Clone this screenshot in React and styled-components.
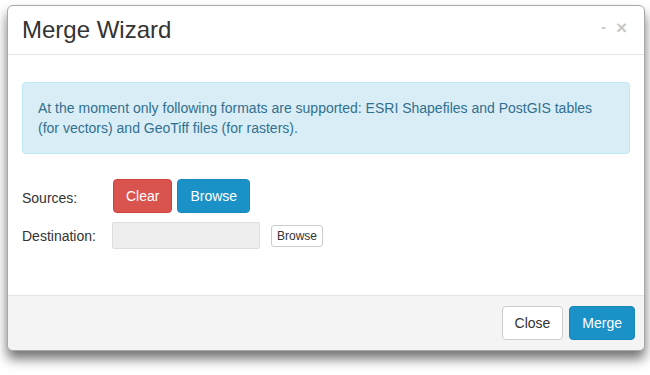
import React from "react";
import styled, { createGlobalStyle } from "styled-components";

const Global = createGlobalStyle`
  html, body { margin: 0; padding: 0; background: #fff; }
  body { font-family: "Liberation Sans", Arial, sans-serif; font-size: 14px; color: #333; }
  * { box-sizing: border-box; }
`;

const Page = styled.div`
  padding: 5px 0 24px 7px;
`;

const Modal = styled.div`
  width: 638px;
  height: 346px;
  border: 1px solid #a8a8a8;
  border-radius: 6px;
  background: #fff;
  box-shadow: 0 8px 12px rgba(0, 0, 0, 0.55);
  display: flex;
  flex-direction: column;
  overflow: hidden;
`;

const Header = styled.div`
  height: 49px;
  border-bottom: 1px solid #e5e5e5;
  padding: 11px 14px 0 14px;
  display: flex;
  align-items: flex-start;
  justify-content: space-between;
`;

const Title = styled.h4`
  margin: 0;
  font-size: 24px;
  line-height: 26px;
  font-weight: normal;
  color: #333;
`;

const Controls = styled.div`
  display: flex;
  align-items: flex-start;
  gap: 10px;
  padding-top: 1px;
  margin-right: 3px;
`;

const Ctl = styled.span`
  color: #c8c8c8;
  font-weight: bold;
  font-size: ${(p) => p.$size}px;
  line-height: 20px;
  margin-top: ${(p) => p.$top}px;
`;

const Body = styled.div`
  flex: 1;
  padding: 27px 14px 0 14px;
`;

const Alert = styled.div`
  background: #d9edf7;
  border: 1px solid #bce8f1;
  border-radius: 4px;
  color: #31708f;
  padding: 15px 15px;
  font-size: 14px;
  line-height: 20px;
`;

const Form = styled.div`
  margin-top: 25px;
  display: flex;
  flex-direction: column;
  gap: 9px;
`;

const Row = styled.div`
  display: flex;
  align-items: center;
`;

const Label = styled.div`
  width: ${(p) => p.$w}px;
  font-size: 14px;
  color: #333;
  padding-top: ${(p) => p.$pt || 0}px;
`;

const Btn = styled.button`
  font-family: inherit;
  font-size: 14px;
  line-height: 20px;
  padding: 6px 12px;
  height: 34px;
  border-radius: 4px;
  border: 1px solid ${(p) => p.$border};
  background: ${(p) => p.$bg};
  color: ${(p) => p.$color};
  cursor: pointer;
`;

const BtnGroup = styled.div`
  display: flex;
  gap: 5px;
`;

const Input = styled.div`
  width: 148px;
  height: 27px;
  background: #eee;
  border: 1px solid #ddd;
  border-radius: 2px;
`;

const SmallBtn = styled.button`
  margin-left: 11px;
  font-family: inherit;
  font-size: 12px;
  line-height: 16px;
  height: 22px;
  padding: 2px 5px;
  background: #fff;
  border: 1px solid #ccc;
  border-radius: 3px;
  color: #333;
`;

const Footer = styled.div`
  height: 55px;
  border-top: 1px solid #e5e5e5;
  background: #f4f4f4;
  padding: 10px 9px 0 0;
  display: flex;
  justify-content: flex-end;
  gap: 6px;
`;

const colors = {
  danger: { bg: "#d9534f", border: "#d43f3a", color: "#fff" },
  primary: { bg: "#1a91c7", border: "#1888bb", color: "#fff" },
  default: { bg: "#fff", border: "#ccc", color: "#333" },
};

const Button = ({ kind, children }) => {
  const c = colors[kind];
  return (
    <Btn $bg={c.bg} $border={c.border} $color={c.color}>
      {children}
    </Btn>
  );
};

export default function App() {
  return (
    <>
      <Global />
      <Page>
        <Modal>
          <Header>
            <Title>Merge Wizard</Title>
            <Controls>
              <Ctl $size={14} $top={-1}>-</Ctl>
              <Ctl $size={19} $top={0}>×</Ctl>
            </Controls>
          </Header>
          <Body>
            <Alert>
              At the moment only following formats are supported: ESRI Shapefiles and PostGIS tables
              (for vectors) and GeoTiff files (for rasters).
            </Alert>
            <Form>
              <Row>
                <Label $w={91} $pt={3}>Sources:</Label>
                <BtnGroup>
                  <Button kind="danger">Clear</Button>
                  <Button kind="primary">Browse</Button>
                </BtnGroup>
              </Row>
              <Row>
                <Label $w={90}>Destination:</Label>
                <Input />
                <SmallBtn>Browse</SmallBtn>
              </Row>
            </Form>
          </Body>
          <Footer>
            <Button kind="default">Close</Button>
            <Button kind="primary">Merge</Button>
          </Footer>
        </Modal>
      </Page>
    </>
  );
}
